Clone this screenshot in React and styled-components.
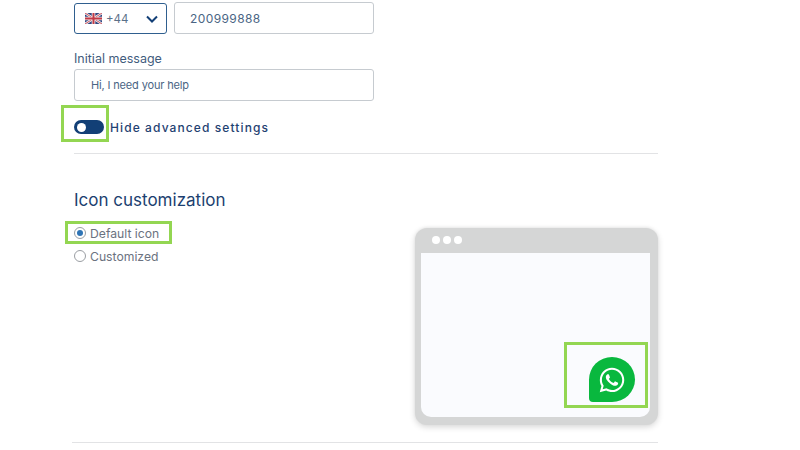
import React from 'react';
import styled, { createGlobalStyle } from 'styled-components';
import { FaWhatsapp } from 'react-icons/fa';

const GlobalStyle = createGlobalStyle`
  html, body {
    margin: 0;
    background: #fff;
    overflow: hidden;
  }
  * {
    box-sizing: border-box;
  }
`;

const Page = styled.div`
  width: 800px;
  height: 450px;
  padding: 2px 142px 0 74px;
  font-family: 'Inter', 'Liberation Sans', sans-serif;
  color: #1c3f70;
`;

const PhoneRow = styled.div`
  display: flex;
  align-items: flex-end;
  gap: 7px;
  width: 300px;
`;

const CountrySelect = styled.div`
  width: 93px;
  height: 31px;
  display: flex;
  align-items: center;
  padding: 0 7px 0 10px;
  border: 1px solid #2f5f8f;
  border-radius: 3px;
  font-size: 11.5px;
  color: #5a7089;
  gap: 4px;
`;

const Chevron = styled.svg`
  margin-left: auto;
  color: #123f76;
`;

const TextBox = styled.div`
  flex: ${(p) => (p.$grow ? 1 : 'none')};
  width: ${(p) => (p.$grow ? 'auto' : '300px')};
  height: 32px;
  display: flex;
  align-items: center;
  padding-left: ${(p) => (p.$grow ? 15 : 16)}px;
  border: 1px solid #c6cbd0;
  border-radius: 3px;
  font-size: ${(p) => (p.$grow ? 12 : 11)}px;
  letter-spacing: ${(p) => (p.$grow ? 0.4 : -0.15)}px;
  color: #4a6584;
`;

const Label = styled.div`
  margin-top: 16px;
  margin-bottom: 2px;
  height: 17px;
  line-height: 17px;
  font-size: 12.5px;
  color: #3f5c7d;
`;

const ToggleRow = styled.div`
  display: flex;
  align-items: center;
  gap: 6px;
  margin-top: 19px;
  height: 14px;
`;

const Highlight = styled.div`
  position: relative;
  &::after {
    content: '';
    position: absolute;
    inset: ${(p) => p.$inset};
    border: 3px solid #93d652;
    pointer-events: none;
  }
`;

const Toggle = styled.div`
  width: 30px;
  height: 14px;
  border-radius: 7px;
  background: #123f76;
  display: flex;
  align-items: center;
  padding-left: 3px;
  &::before {
    content: '';
    width: 9px;
    height: 9px;
    border-radius: 50%;
    background: #fff;
  }
`;

const ToggleLabel = styled.div`
  font-size: 12px;
  font-weight: 500;
  letter-spacing: 1.1px;
  color: #1f4272;
`;

const Divider = styled.hr`
  margin: ${(p) => p.$top}px 0 0 ${(p) => p.$left || 0}px;
  border: 0;
  border-top: 1px solid #e2e3e5;
`;

const Heading = styled.h2`
  margin: 35px 0 0;
  height: 22px;
  line-height: 22px;
  font-size: 17px;
  font-weight: 400;
  color: #1c3f70;
`;

const CustomizeRow = styled.div`
  display: flex;
  justify-content: space-between;
  align-items: flex-start;
  height: 206px;
  margin-top: 8px;
`;

const RadioList = styled.div`
  display: flex;
  flex-direction: column;
  gap: 9px;
  padding-top: 7px;
`;

const RadioItem = styled.div`
  display: flex;
  align-items: center;
  gap: 4px;
  height: 14px;
  width: max-content;
  font-size: 12.2px;
  color: #6b7280;
`;

const Radio = styled.span`
  width: 12px;
  height: 12px;
  border-radius: 50%;
  border: 1px solid #9a9ea3;
  display: flex;
  align-items: center;
  justify-content: center;
  &::before {
    content: '';
    width: 6px;
    height: 6px;
    border-radius: 50%;
    background: ${(p) => (p.$checked ? '#2f74b5' : 'transparent')};
  }
`;

const BrowserMock = styled.div`
  width: 243px;
  height: 197px;
  margin-top: 9px;
  padding: 0 8px 8px 6px;
  display: flex;
  flex-direction: column;
  border-radius: 12px;
  background: #d5d6d6;
  box-shadow: 0 2px 6px rgba(0, 0, 0, 0.16), 0 -1px 3px rgba(0, 0, 0, 0.05);
`;

const BrowserBar = styled.div`
  height: 25px;
  flex: none;
  display: flex;
  align-items: center;
  gap: 3px;
  padding: 0 0 1px 11px;
`;

const Dot = styled.span`
  width: 8px;
  height: 8px;
  border-radius: 50%;
  background: #fff;
`;

const BrowserBody = styled.div`
  flex: 1;
  display: flex;
  justify-content: flex-end;
  align-items: flex-end;
  padding: 0 15px 15px 0;
  background: #fafbfe;
  border-radius: 0 0 10px 10px;
`;

const ChatBubble = styled.div`
  width: 46px;
  height: 45px;
  display: flex;
  align-items: center;
  justify-content: center;
  border-radius: 50% 50% 50% 4px;
  background: #09b83e;
  color: #fff;
  font-size: 28px;
`;

const UkFlag = () => (
  <svg width="17" height="11" viewBox="0 0 17 11">
    <rect width="17" height="11" fill="#2f4580" />
    <path d="M0 0L17 11M17 0L0 11" stroke="#eee" strokeWidth="2.4" />
    <path d="M0 0L17 11M17 0L0 11" stroke="#c8404c" strokeWidth="0.9" />
    <path d="M8.5 0V11M0 5.5H17" stroke="#eee" strokeWidth="3.6" />
    <path d="M8.5 0V11M0 5.5H17" stroke="#c23a46" strokeWidth="2" />
  </svg>
);

const App = () => (
  <Page>
    <GlobalStyle />
    <PhoneRow>
      <CountrySelect>
        <UkFlag />
        <span>+44</span>
        <Chevron width="14" height="14" viewBox="0 0 14 14" fill="none">
          <path d="M2 4.5L7 9.5L12 4.5" stroke="currentColor" strokeWidth="2" />
        </Chevron>
      </CountrySelect>
      <TextBox $grow>200999888</TextBox>
    </PhoneRow>
    <Label>Initial message</Label>
    <TextBox>Hi, I need your help</TextBox>
    <ToggleRow>
      <Highlight $inset="-15px -5px -8px -13px">
        <Toggle />
      </Highlight>
      <ToggleLabel>Hide advanced settings</ToggleLabel>
    </ToggleRow>
    <Divider $top={19} />
    <Heading>Icon customization</Heading>
    <CustomizeRow>
      <RadioList>
        <Highlight $inset="-5px -13px -4px -9px">
          <RadioItem>
            <Radio $checked />
            Default icon
          </RadioItem>
        </Highlight>
        <RadioItem>
          <Radio />
          Customized
        </RadioItem>
      </RadioList>
      <BrowserMock>
        <BrowserBar>
          <Dot />
          <Dot />
          <Dot />
        </BrowserBar>
        <BrowserBody>
          <Highlight $inset="-15px -13px -6px -25px">
            <ChatBubble>
              <FaWhatsapp />
            </ChatBubble>
          </Highlight>
        </BrowserBody>
      </BrowserMock>
    </CustomizeRow>
    <Divider $top={17} $left={-2} />
  </Page>
);

export default App;
